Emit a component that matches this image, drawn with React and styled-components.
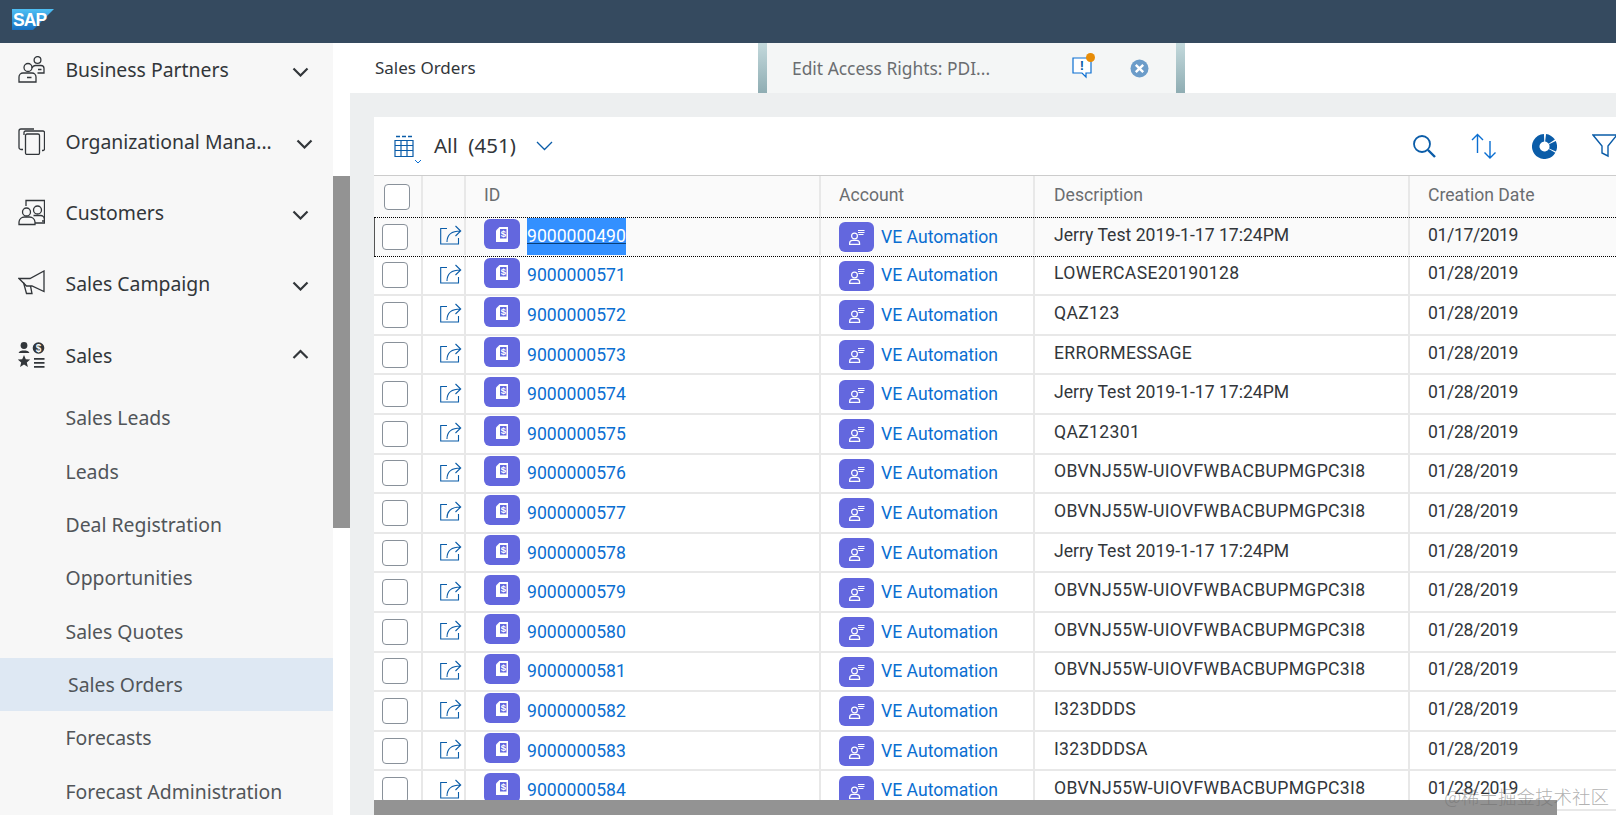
import React from "react";
import styled, { createGlobalStyle } from "styled-components";

const GlobalStyle = createGlobalStyle`
  html, body {
    margin: 0;
    padding: 0;
    height: 100%;
    overflow: hidden;
    background: #fff;
  }
  * {
    box-sizing: border-box;
  }
`;

const navItems = [
  { label: "Business Partners", icon: "partners" },
  { label: "Organizational Mana...", icon: "org", shifted: true },
  { label: "Customers", icon: "customers" },
  { label: "Sales Campaign", icon: "campaign" },
  { label: "Sales", icon: "sales", open: true },
];

const subItems = [
  "Sales Leads",
  "Leads",
  "Deal Registration",
  "Opportunities",
  "Sales Quotes",
  "Sales Orders",
  "Forecasts",
  "Forecast Administration",
];

const JERRY = "Jerry Test 2019-1-17 17:24PM";
const OBV = "OBVNJ55W-UIOVFWBACBUPMGPC3I8";

const rows = [
  ["9000000490", JERRY, "01/17/2019"],
  ["9000000571", "LOWERCASE20190128", "01/28/2019"],
  ["9000000572", "QAZ123", "01/28/2019"],
  ["9000000573", "ERRORMESSAGE", "01/28/2019"],
  ["9000000574", JERRY, "01/28/2019"],
  ["9000000575", "QAZ12301", "01/28/2019"],
  ["9000000576", OBV, "01/28/2019"],
  ["9000000577", OBV, "01/28/2019"],
  ["9000000578", JERRY, "01/28/2019"],
  ["9000000579", OBV, "01/28/2019"],
  ["9000000580", OBV, "01/28/2019"],
  ["9000000581", OBV, "01/28/2019"],
  ["9000000582", "I323DDDS", "01/28/2019"],
  ["9000000583", "I323DDDSA", "01/28/2019"],
  ["9000000584", OBV, "01/28/2019"],
];

// sidebar icons
const NavIcon = ({ name }) => {
  if (name === "partners") {
    return (
      <IconSvg viewBox="0 0 27 27">
        <circle cx="19.500" cy="4" r="3.400" />
        <path d="M14 12a4 4 0 0 1 4-2.500h5a3 3 0 0 1 3 3v4.500h-6.500M20 13.500h3.500" />
        <circle cx="10" cy="11.500" r="4" />
        <path d="M1 26v-5a4 4 0 0 1 4-4h9a4 4 0 0 1 4 4v5zM9 21.500h4.500" />
      </IconSvg>
    );
  }
  if (name === "org") {
    return (
      <IconSvg viewBox="0 0 27 27">
        <rect x="7.500" y="6" width="14" height="20.500" rx="1.500" />
        <path d="M5 21.500H3a2 2 0 0 1-2-2V3a2 2 0 0 1 2-2h13" />
        <path d="M6 7V4.500a1.500 1.500 0 0 1 1.500-1.500H25a1.500 1.500 0 0 1 1.500 1.500V21a1.500 1.500 0 0 1-1.500 1.500h-1" />
      </IconSvg>
    );
  }
  if (name === "customers") {
    return (
      <IconSvg viewBox="0 0 27 27">
        <path d="M8 7V1.500h18.500V22H24" />
        <circle cx="8.500" cy="13" r="4" />
        <circle cx="19.500" cy="11" r="4" />
        <path d="M1 25.500V23a5.500 5.500 0 0 1 5.500-5h5a5.500 5.500 0 0 1 5.500 5v2.500zM15.500 16.500h7a4 4 0 0 1 4 4v3.500h-9" />
      </IconSvg>
    );
  }
  if (name === "campaign") {
    return (
      <IconSvg viewBox="0 0 27 27">
        <path d="M26 1v20.500l-12-5.500H8.500L1 8.500h11z" />
        <path d="M5.500 12.500L8.500 23.500h5.500l-1.500-7.500" />
      </IconSvg>
    );
  }
  return (
    <IconSvg viewBox="0 0 27 27" $solid>
      <circle cx="6" cy="3.500" r="3.400" />
      <path d="M0.500 11a4 3.500 0 0 1 4-2.500h3a4 3.500 0 0 1 4 2.500z" />
      <circle cx="20.500" cy="6" r="5.800" />
      <SalesDollar x="20.500" y="10">$</SalesDollar>
      <path d="M6 13l1.800 4.200 4.400.3-3.400 2.900 1.100 4.500L6 22.500l-3.900 2.400 1.100-4.500-3.400-2.900 4.400-.3z" />
      <path d="M16 16h10.500v1.800H16zM16 20h10.500v1.800H16zM16 24h10.500v1.800H16z" />
    </IconSvg>
  );
};

const Chevron = ({ up }) => (
  <ChevronSvg viewBox="0 0 17 10">
    <path d={up ? "M1.500 9L8.500 2l7 7" : "M1.500 1.500l7 7 7-7"} />
  </ChevronSvg>
);

const ShareIcon = () => (
  <ShareSvg viewBox="0 0 22 21">
    <path d="M7 3.500H.7V19h17.800v-6" />
    <path d="M7 17c0-7 5-11 13.500-11M15.500 1l5.200 5-5.200 5" />
  </ShareSvg>
);

const OrderGlyph = () => (
  <BadgeSvg viewBox="0 0 14 15" width="14" height="15">
    <path d="M4.500 0H13v15H1V3.500z" fill="#fff" />
    <rect x="5" y="2" width="6.500" height="9.500" fill="#6367de" />
    <DocDollar x="8.300" y="10">$</DocDollar>
  </BadgeSvg>
);

const AccountGlyph = () => (
  <BadgeSvg viewBox="0 0 16 16" width="16" height="16">
    <circle cx="5.500" cy="7" r="2.900" fill="none" stroke="#fff" strokeWidth="1.200" />
    <path
      d="M.6 15.400v-1a3 3 0 0 1 3-3h4a3 3 0 0 1 3 3v1z"
      fill="none"
      stroke="#fff"
      strokeWidth="1.200"
    />
    <path d="M9 1.500h6.500M9 3.500h6.500M9.500 5.500h5" stroke="#fff" strokeWidth="1" />
  </BadgeSvg>
);

const App = () => {
  return (
    <>
      <GlobalStyle />
      <Page>
        <TopBar>
          <svg width="42" height="21" viewBox="0 0 42 21">
            <defs>
              <linearGradient id="sapBlue" x1="0" y1="0" x2="0" y2="1">
                <stop offset="0" stopColor="#4fc0f5" />
                <stop offset="1" stopColor="#1670c2" />
              </linearGradient>
            </defs>
            <path d="M0 0h42L21 21H0z" fill="url(#sapBlue)" />
            <LogoText x="1" y="17">SAP</LogoText>
          </svg>
        </TopBar>

        <Main>
          <Sidebar>
            <NavList>
              {navItems.map((item) => (
                <NavItem key={item.label}>
                  <NavIcon name={item.icon} />
                  <NavLabel>{item.label}</NavLabel>
                  <ChevronSlot $shifted={item.shifted} $up={item.open}>
                    <Chevron up={item.open} />
                  </ChevronSlot>
                </NavItem>
              ))}
              <SubList>
                {subItems.map((label) => (
                  <SubItem key={label} $active={label === "Sales Orders"}>
                    {label}
                  </SubItem>
                ))}
              </SubList>
            </NavList>
          </Sidebar>

          <ScrollTrack>
            <ScrollThumb />
          </ScrollTrack>

          <Content>
            <TabBar>
              <ActiveTab>Sales Orders</ActiveTab>
              <TabEdge />
              <OtherTab>
                <TabTitle>Edit Access Rights: PDI...</TabTitle>
                <MessageBtn>
                  <svg width="20" height="22" viewBox="0 0 20 22">
                    <path
                      d="M1 1h18v15h-5v4l-4-4H1z"
                      fill="#fff"
                      stroke="#0a6ed1"
                      strokeWidth="1.200"
                    />
                    <MessageMark x="10" y="13">!</MessageMark>
                  </svg>
                  <OrangeDot />
                </MessageBtn>
                <svg width="19" height="19" viewBox="0 0 19 19">
                  <circle cx="9.500" cy="9.500" r="9" fill="#6b9cc9" />
                  <path
                    d="M5.800 5.800l7.400 7.400M13.200 5.800l-7.400 7.400"
                    stroke="#fff"
                    strokeWidth="2.400"
                  />
                </svg>
              </OtherTab>
              <TabEdge />
            </TabBar>

            <Workspace>
              <Panel>
                <Toolbar>
                  <ViewPicker>
                    <svg width="24" height="22" viewBox="0 0 24 22">
                      <path
                        d="M3 5.500h18v16H3zM3 10.500h18M3 15.500h18M9 5.500v16M15 5.500v16"
                        fill="none"
                        stroke="#0a5ca8"
                        strokeWidth="1.200"
                      />
                      <path
                        d="M4 1.500h4M10 1.500h4M16 1.500h4"
                        stroke="#0a5ca8"
                        strokeWidth="1.600"
                      />
                    </svg>
                    <TinyChevron viewBox="0 0 8 5">
                      <path d="M1 1l3 3 3-3" />
                    </TinyChevron>
                  </ViewPicker>
                  <ViewTitle>All&nbsp; (451)</ViewTitle>
                  <ViewChevron viewBox="0 0 17 10">
                    <path d="M1 1l7.500 7.500L16 1" />
                  </ViewChevron>
                  <ToolGroup>
                    <svg width="24" height="24" viewBox="0 0 24 24">
                      <circle cx="10" cy="10" r="8" fill="none" stroke="#0a5ca8" strokeWidth="1.800" />
                      <path d="M16 16l7 7" stroke="#0a5ca8" strokeWidth="2.400" />
                    </svg>
                    <svg width="26" height="26" viewBox="0 0 26 26">
                      <path
                        d="M6.500 20V1.500M1 7l5.500-5.500L12 7M19 8v17M13.500 19.500l5.500 5.500 5.500-5.500"
                        fill="none"
                        stroke="#0a6ed1"
                        strokeWidth="1.400"
                      />
                    </svg>
                    <svg width="25" height="25" viewBox="0 0 25 25">
                      <circle
                        cx="12.500"
                        cy="12.500"
                        r="8.750"
                        fill="none"
                        stroke="#0a5ca8"
                        strokeWidth="7.500"
                        strokeDasharray="36 1.500 7.500 1.200 7.500 1.300"
                        transform="rotate(30 12.500 12.500)"
                      />
                    </svg>
                    <svg width="26" height="24" viewBox="0 0 26 24">
                      <path
                        d="M1 1h24l-9 11v10l-6-3v-7z"
                        fill="none"
                        stroke="#0a5ca8"
                        strokeWidth="1.400"
                      />
                    </svg>
                  </ToolGroup>
                </Toolbar>

                <HeaderRow>
                  <SelectCell $header>
                    <CheckBox />
                  </SelectCell>
                  <ShareCell />
                  <IdCell>
                    <HeaderText>ID</HeaderText>
                  </IdCell>
                  <AccountCell>
                    <HeaderText>Account</HeaderText>
                  </AccountCell>
                  <DescCell>
                    <HeaderText>Description</HeaderText>
                  </DescCell>
                  <DateCell>
                    <HeaderText>Creation Date</HeaderText>
                  </DateCell>
                </HeaderRow>

                {rows.map(([id, desc, date], i) => (
                  <Row key={id} $focused={i === 0}>
                    <SelectCell>
                      <CheckBox />
                    </SelectCell>
                    <ShareCell>
                      <ShareIcon />
                    </ShareCell>
                    <IdCell>
                      <OrderBadge>
                        <OrderGlyph />
                      </OrderBadge>
                      <LinkText $selected={i === 0}>{id}</LinkText>
                    </IdCell>
                    <AccountCell>
                      <AccountBadge>
                        <AccountGlyph />
                      </AccountBadge>
                      <LinkText>VE Automation</LinkText>
                    </AccountCell>
                    <DescCell>
                      <CellText $caps={desc === desc.toUpperCase()}>{desc}</CellText>
                    </DescCell>
                    <DateCell>
                      <DateText>{date}</DateText>
                    </DateCell>
                  </Row>
                ))}
              </Panel>
              <HorizontalThumb />
            </Workspace>
          </Content>
        </Main>
        <Watermark>@稀土掘金技术社区</Watermark>
      </Page>
    </>
  );
};

const Page = styled.div`
  position: relative;
  width: 1616px;
  height: 815px;
  display: flex;
  flex-direction: column;
  overflow: hidden;
  font-family: "Noto Sans", "Liberation Sans", sans-serif;
  color: #32363a;
`;

const TopBar = styled.header`
  flex: 0 0 43px;
  background: #354a5f;
  padding: 9px 0 0 12px;
`;

const LogoText = styled.text`
  font-family: "Liberation Sans", sans-serif;
  font-weight: 700;
  font-size: 17.500px;
  letter-spacing: -0.9px;
  fill: #fff;
`;

const Main = styled.div`
  flex: 1;
  display: flex;
  min-height: 0;
`;

const Sidebar = styled.nav`
  flex: 0 0 333px;
  background: #f7f7f7;
  overflow: hidden;
`;

const NavList = styled.div`
  margin-top: -8px;
`;

const SubList = styled.div`
  margin-top: -1px;
`;

const NavItem = styled.div`
  height: 71.400px;
  display: flex;
  align-items: center;
  padding: 0 0 2px 18px;
`;

const IconSvg = styled.svg`
  width: 27px;
  height: 27px;
  flex: none;
  fill: ${(p) => (p.$solid ? "#32363a" : "none")};
  stroke: ${(p) => (p.$solid ? "none" : "#32363a")};
  stroke-width: 1.300;
`;

const SalesDollar = styled.text`
  font-family: "Liberation Sans", sans-serif;
  font-size: 10px;
  font-weight: 700;
  text-anchor: middle;
  fill: #f7f7f7;
`;

const NavLabel = styled.span`
  flex: 1;
  margin-left: 20.500px;
  font-size: 19.400px;
  white-space: nowrap;
`;

const ChevronSlot = styled.span`
  display: flex;
  margin-top: ${(p) => (p.$up ? "-2px" : "5px")};
  margin-right: ${(p) => (p.$shifted ? "20px" : "24px")};
`;

const ChevronSvg = styled.svg`
  width: 17px;
  height: 10px;
  fill: none;
  stroke: #32363a;
  stroke-width: 2.200;
`;

const SubItem = styled.div`
  height: 53.400px;
  display: flex;
  align-items: center;
  padding-left: ${(p) => (p.$active ? "68px" : "65.500px")};
  font-size: 19.400px;
  color: #515559;
  background: ${(p) => (p.$active ? "#dee8f3" : "transparent")};
`;

const ScrollTrack = styled.div`
  flex: 0 0 17px;
  background: #fff;
  padding-top: 133px;
`;

const ScrollThumb = styled.div`
  height: 352px;
  background: #939393;
`;

const Content = styled.div`
  flex: 1;
  min-width: 0;
  display: flex;
  flex-direction: column;
`;

const TabBar = styled.div`
  flex: 0 0 50px;
  display: flex;
  background: #fff;
`;

const ActiveTab = styled.div`
  flex: 0 0 408px;
  display: flex;
  align-items: center;
  padding: 0 0 2px 25px;
  font-size: 17px;
  color: #32363a;
`;

const TabEdge = styled.div`
  flex: 0 0 9px;
  background: linear-gradient(#c3d9dc, #8fadb3);
`;

const OtherTab = styled.div`
  flex: 0 0 409px;
  display: flex;
  align-items: center;
  padding-left: 25px;
  background: #f4f6f6;
`;

const TabTitle = styled.span`
  flex: 0 0 280px;
  font-size: 17.400px;
  color: #6a6d70;
  white-space: nowrap;
`;

const MessageBtn = styled.span`
  position: relative;
  display: flex;
  margin-right: 38px;
`;

const MessageMark = styled.text`
  font-family: "Liberation Sans", sans-serif;
  font-size: 13px;
  font-weight: 700;
  text-anchor: middle;
  fill: #0a5ca8;
`;

const OrangeDot = styled.span`
  position: absolute;
  top: -4px;
  right: -3px;
  width: 9px;
  height: 9px;
  border-radius: 50%;
  background: #e78c07;
`;

const Workspace = styled.main`
  position: relative;
  flex: 1;
  min-height: 0;
  background: #edeff0;
  padding: 24px 0 0 24px;
`;

const Panel = styled.section`
  height: 100%;
  background: #fff;
  overflow: hidden;
  font-family: Roboto, "Liberation Sans", sans-serif;
`;

const Toolbar = styled.div`
  height: 59px;
  display: flex;
  align-items: center;
  padding-left: 18px;
  border-bottom: 1px solid #cccccc;
`;

const ViewPicker = styled.span`
  position: relative;
  display: flex;
  margin-right: 18px;
`;

const TinyChevron = styled.svg`
  position: absolute;
  right: -6px;
  bottom: -7px;
  width: 8px;
  height: 5px;
  fill: none;
  stroke: #0a6ed1;
  stroke-width: 1;
`;

const ViewTitle = styled.span`
  font-family: "Noto Sans", sans-serif;
  font-size: 20.500px;
  margin-bottom: 2px;
  color: #32363a;
`;

const ViewChevron = styled.svg`
  width: 17px;
  height: 10px;
  margin-left: 20px;
  fill: none;
  stroke: #0a5ca8;
  stroke-width: 1.300;
`;

const ToolGroup = styled.div`
  margin-left: auto;
  display: flex;
  align-items: center;
  gap: 35px;
  margin-right: -1.500px;
`;

const HeaderRow = styled.div`
  height: 41px;
  display: grid;
  grid-template-columns: 49px 43px 355px 214px 375px 1fr;
  background: #fafafa;
`;

const Row = styled.div`
  height: 39.600px;
  display: grid;
  grid-template-columns: 49px 43px 355px 214px 375px 1fr;
  align-items: stretch;
  background: ${(p) => (p.$focused ? "#fafafa" : "#fff")};
  border-top: ${(p) => (p.$focused ? "1px dotted #000" : "none")};
  border-bottom: ${(p) => (p.$focused ? "1px dotted #000" : "2px solid #e8e8e8")};
  padding-bottom: ${(p) => (p.$focused ? "2px" : "0")};
  box-shadow: ${(p) => (p.$focused ? "inset 1px 0 0 #555" : "none")};
`;

const Cell = styled.div`
  display: flex;
  align-items: center;
  min-width: 0;
  border-right: 2px solid #e8e8e8;
`;

const SelectCell = styled(Cell)`
  padding-left: ${(p) => (p.$header ? "10px" : "8px")};
`;

const ShareCell = styled(Cell)`
  justify-content: flex-end;
  padding: 0 2px 2px 0;
`;

const IdCell = styled(Cell)`
  padding-left: 18px;
`;

const AccountCell = styled(Cell)`
  padding-left: 18px;
`;

const DescCell = styled(Cell)`
  padding-left: 19px;
`;

const DateCell = styled(Cell)`
  padding-left: 18px;
  border-right: none;
`;

const CheckBox = styled.span`
  display: block;
  width: 26px;
  height: 26px;
  background: #fff;
  border: 1px solid #89919a;
  border-radius: 4px;
`;

const ShareSvg = styled.svg`
  width: 22px;
  height: 21px;
  fill: none;
  stroke: #0a5ca8;
  stroke-width: 1.100;
`;

const HeaderText = styled.span`
  font-size: 17.600px;
  margin-bottom: 3px;
  color: #6a6d70;
`;

const OrderBadge = styled.span`
  flex: 0 0 36px;
  height: 30px;
  margin: -5px 7px 0 0;
  display: flex;
  align-items: center;
  justify-content: center;
  background: #6367de;
  border-radius: 6px;
`;

const AccountBadge = styled(OrderBadge)`
  flex-basis: 35px;
  margin: 1px 7px 0 0;
`;

const BadgeSvg = styled.svg`
  display: block;
`;

const DocDollar = styled.text`
  font-family: "Liberation Sans", sans-serif;
  font-size: 9.500px;
  font-weight: 700;
  text-anchor: middle;
  fill: #fff;
`;

const LinkText = styled.span`
  font-size: 17.600px;
  line-height: ${(p) => (p.$selected ? "37px" : "normal")};
  color: ${(p) => (p.$selected ? "#fff" : "#0a6ed1")};
  background: ${(p) => (p.$selected ? "#3390ff" : "transparent")};
  text-decoration: ${(p) => (p.$selected ? "underline" : "none")};
  text-decoration-color: #0a3f78;
`;

const CellText = styled.span`
  font-size: 17.600px;
  margin-bottom: 4px;
  white-space: nowrap;
  letter-spacing: ${(p) => (p.$caps ? "0.32px" : "0")};
  color: #32363a;
`;

const DateText = styled(CellText)`
  letter-spacing: -0.35px;
`;

const HorizontalThumb = styled.div`
  position: absolute;
  left: 24px;
  bottom: 0;
  width: 1183px;
  height: 15px;
  background: #939393;
`;

const Watermark = styled.div`
  position: absolute;
  right: 7px;
  bottom: 6px;
  font-family: "Noto Sans CJK SC", "Noto Sans", sans-serif;
  font-weight: 300;
  font-size: 18.500px;
  color: rgba(110, 110, 110, 0.55);
`;

export default App;
